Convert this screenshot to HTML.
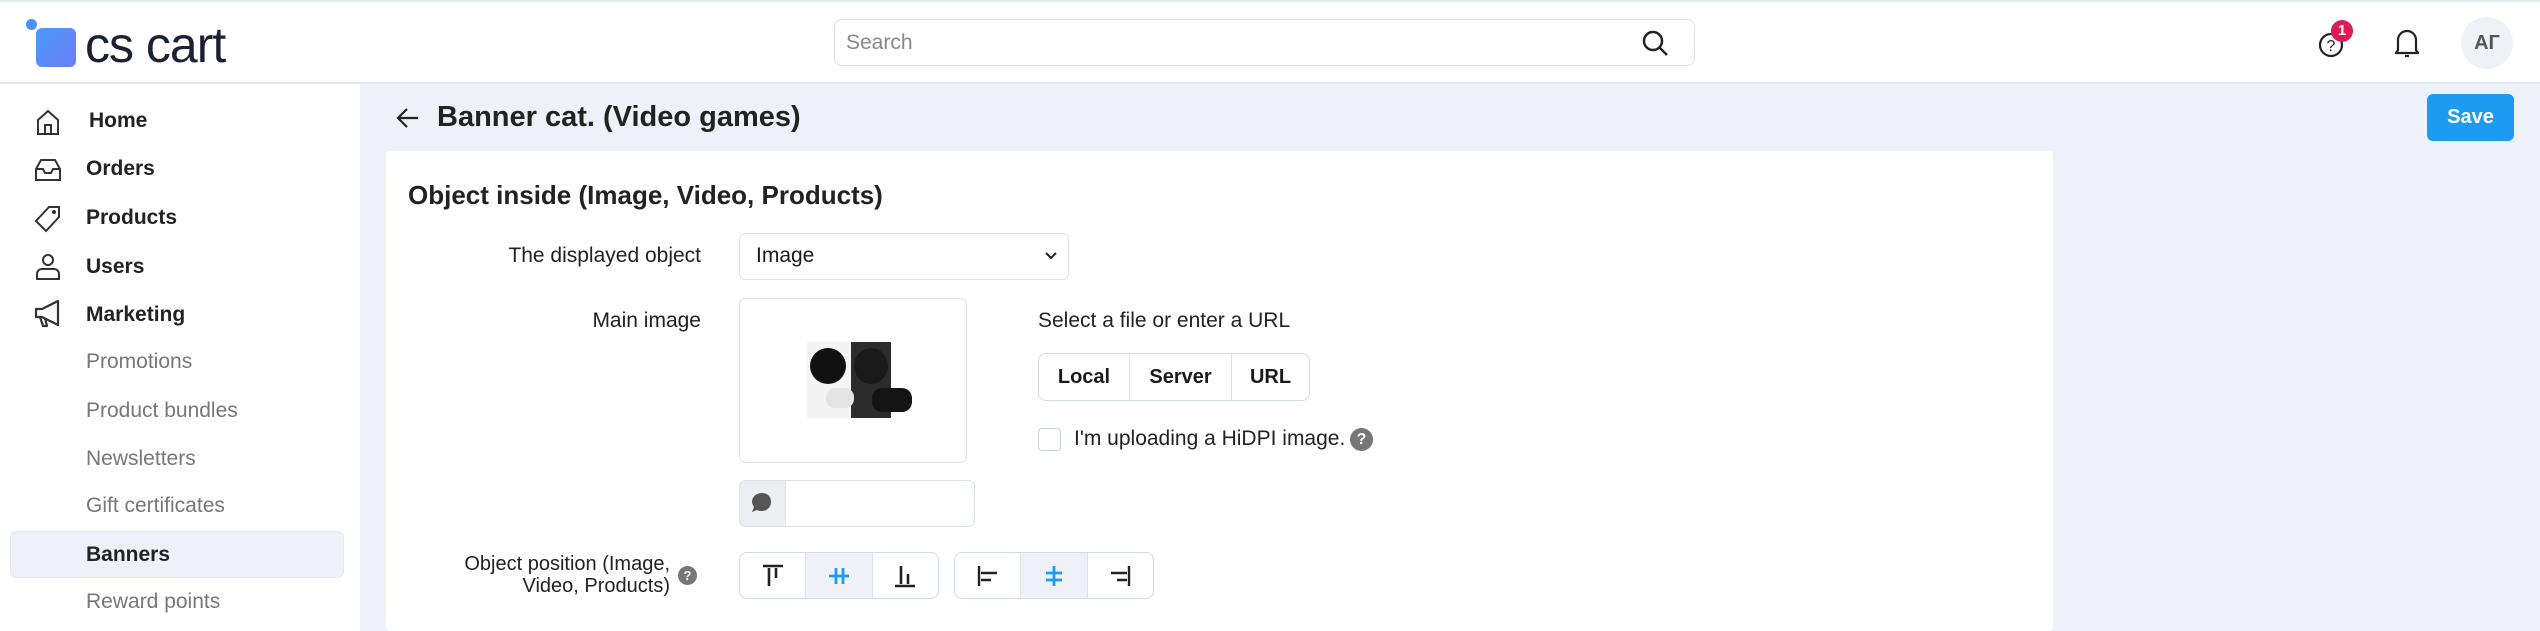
<!DOCTYPE html>
<html><head><meta charset="utf-8"><style>
*{box-sizing:border-box;margin:0;padding:0}
body{width:2540px;height:631px;overflow:hidden;background:#eef2f8;font-family:"Liberation Sans",sans-serif;color:#1a1a1a;position:relative}
.a{position:absolute}
.hdr{left:0;top:0;width:2540px;height:84px;background:#fff;border-top:2px solid #dde8ec;border-bottom:2px solid #e3e8f0}
.side{left:0;top:84px;width:360px;height:547px;background:#fff}
.nav{left:86px;font-size:21px;font-weight:bold;color:#222}
.sub{left:86px;font-size:21px;color:#777}
.card{left:386px;top:151px;width:1667px;height:480px;background:#fff;border-radius:4px}
.lbl{font-size:21px;color:#222;text-align:right}
.box{border:1.5px solid #dde2ea;border-radius:6px;background:#fff}
.seg{display:flex;border:1.5px solid #d3dbe8;border-radius:8px;overflow:hidden;background:#fff}
.seg div{flex:1;display:flex;align-items:center;justify-content:center;border-right:1.5px solid #dde3ec}
.seg div:last-child{border-right:none}
</style></head><body>
<div class="a hdr"></div>
<div class="a" style="left:36px;top:28px;width:40px;height:39px;border-radius:6px;background:linear-gradient(135deg,#4a9cf8,#6d7cf6)"></div>
<div class="a" style="left:26px;top:19px;width:11px;height:11px;border-radius:50%;background:#4f8ff7"></div>
<div class="a" style="left:85px;top:16px;font-size:50px;color:#1c2233;letter-spacing:-1px">cs cart</div>
<div class="a box" style="left:834px;top:19px;width:861px;height:47px;border-radius:8px"></div>
<div class="a" style="left:846px;top:31px;font-size:21px;color:#888">Search</div>
<svg class="a" style="left:1640px;top:28px" width="30" height="30" viewBox="0 0 30 30"><circle cx="13" cy="13" r="9" fill="none" stroke="#222" stroke-width="2.5"/><path d="M20 20l7 7" stroke="#222" stroke-width="2.5"/></svg>
<svg class="a" style="left:2316px;top:28px" width="32" height="32" viewBox="0 0 32 32"><circle cx="15" cy="17" r="11" fill="none" stroke="#222" stroke-width="2.2"/><text x="15" y="23" font-size="16" text-anchor="middle" font-family="Liberation Sans" fill="#222">?</text></svg>
<div class="a" style="left:2331px;top:20px;width:22px;height:22px;border-radius:50%;background:#dc1a56;color:#fff;font-size:15px;font-weight:bold;text-align:center;line-height:22px">1</div>
<svg class="a" style="left:2392px;top:26px" width="30" height="34" viewBox="0 0 30 34"><path d="M6 24V14a9 9 0 0118 0v10l2 3H4z" fill="none" stroke="#222" stroke-width="2.2" stroke-linejoin="round"/><path d="M13 30h4" stroke="#222" stroke-width="2.2"/></svg>
<div class="a" style="left:2461px;top:17px;width:52px;height:52px;border-radius:50%;background:#eef2f7;color:#555;font-weight:bold;font-size:20px;text-align:center;line-height:52px">АГ</div>

<div class="a side"></div>
<svg class="a" style="left:35px;top:108px" width="26" height="28" viewBox="0 0 26 28"><path d="M3 12L13 3l10 9v14H3z M10 26v-9h6v9" fill="none" stroke="#333" stroke-width="2"/></svg>
<svg class="a" style="left:33px;top:157px" width="30" height="26" viewBox="0 0 30 26"><path d="M3 12l5-9h14l5 9v11H3z M3 12h7l2 4h6l2-4h7" fill="none" stroke="#333" stroke-width="2"/></svg>
<svg class="a" style="left:33px;top:204px" width="30" height="30" viewBox="0 0 30 30"><path d="M16 3h10v10L13 27 3 17z" fill="none" stroke="#333" stroke-width="2"/><circle cx="21" cy="8" r="2" fill="#333"/></svg>
<svg class="a" style="left:33px;top:252px" width="30" height="30" viewBox="0 0 30 30"><circle cx="15" cy="8" r="5" fill="none" stroke="#333" stroke-width="2"/><path d="M4 27v-5a5 5 0 015-5h12a5 5 0 015 5v5z" fill="none" stroke="#333" stroke-width="2"/></svg>
<svg class="a" style="left:32px;top:299px" width="32" height="30" viewBox="0 0 32 30"><path d="M4 10h6l16-8v24L10 18H4z M8 18l3 9h4l-2-8" fill="none" stroke="#333" stroke-width="2.2" stroke-linejoin="round"/></svg>
<div class="a nav" style="top:109px;left:89px">Home</div>
<div class="a nav" style="top:157px">Orders</div>
<div class="a nav" style="top:206px">Products</div>
<div class="a nav" style="top:255px">Users</div>
<div class="a nav" style="top:303px">Marketing</div>
<div class="a sub" style="top:350px">Promotions</div>
<div class="a sub" style="top:399px">Product bundles</div>
<div class="a sub" style="top:447px">Newsletters</div>
<div class="a sub" style="top:494px">Gift certificates</div>
<div class="a" style="left:10px;top:531px;width:334px;height:47px;background:#eef2f8;border-radius:6px;border:1px solid #e4e9f1"></div>
<div class="a nav" style="top:543px">Banners</div>
<div class="a sub" style="top:590px">Reward points</div>

<svg class="a" style="left:395px;top:106px" width="26" height="24" viewBox="0 0 26 24"><path d="M23 12H4M12 3l-9 9 9 9" fill="none" stroke="#222" stroke-width="2.2"/></svg>
<div class="a" style="left:437px;top:101px;font-size:29px;font-weight:bold;color:#222">Banner cat. (Video games)</div>
<div class="a" style="left:2427px;top:94px;width:87px;height:47px;background:#1d9bf0;border-radius:6px;color:#fff;font-weight:bold;font-size:20px;text-align:center;line-height:47px">Save</div>

<div class="a card"></div>
<div class="a" style="left:408px;top:180px;font-size:26px;font-weight:bold;color:#222">Object inside (Image, Video, Products)</div>
<div class="a lbl" style="left:300px;width:401px;top:244px">The displayed object</div>
<div class="a box" style="left:739px;top:233px;width:330px;height:47px"></div>
<div class="a" style="left:756px;top:244px;font-size:21px">Image</div>
<svg class="a" style="left:1044px;top:251px" width="14" height="10" viewBox="0 0 14 10"><path d="M2 2l5 5 5-5" fill="none" stroke="#222" stroke-width="2"/></svg>

<div class="a lbl" style="left:300px;width:401px;top:309px">Main image</div>
<div class="a box" style="left:739px;top:298px;width:228px;height:165px"></div>
<div class="a" style="left:807px;top:342px;width:44px;height:76px;background:#f4f4f4"></div>
<div class="a" style="left:851px;top:342px;width:40px;height:76px;background:#2c2c2c"></div>
<div class="a" style="left:810px;top:348px;width:36px;height:36px;border-radius:50%;background:#111"></div>
<div class="a" style="left:854px;top:348px;width:34px;height:36px;border-radius:50%;background:#1a1a1a"></div>
<div class="a" style="left:826px;top:388px;width:28px;height:20px;border-radius:9px;background:#e4e4e4"></div>
<div class="a" style="left:872px;top:388px;width:40px;height:24px;border-radius:10px;background:#141414"></div>

<div class="a box" style="left:739px;top:480px;width:236px;height:47px;overflow:hidden"><div style="width:46px;height:100%;background:#eceef2;border-right:1px solid #dde2ea"></div></div>
<svg class="a" style="left:749px;top:490px" width="26" height="26" viewBox="0 0 26 26"><path d="M13 3c6 0 9 4 9 9s-4 9-9 9c-2 0-3 0-5-1l-5 2 2-5c-1-2-2-3-2-5 0-5 4-9 10-9z" fill="#555"/></svg>

<div class="a" style="left:1038px;top:309px;font-size:21px;color:#222">Select a file or enter a URL</div>
<div class="a seg" style="left:1038px;top:353px;width:272px;height:48px;font-size:20px;font-weight:bold">
<div style="flex:0 0 91px">Local</div><div style="flex:0 0 102px">Server</div><div>URL</div></div>
<div class="a" style="left:1038px;top:428px;width:23px;height:23px;border:1.5px solid #c8d0dc;border-radius:4px"></div>
<div class="a" style="left:1074px;top:427px;font-size:21px;color:#222">I'm uploading a HiDPI image.</div>
<div class="a" style="left:1350px;top:428px;width:23px;height:23px;border-radius:50%;background:#777;color:#fff;font-size:16px;font-weight:bold;text-align:center;line-height:23px">?</div>

<div class="a lbl" style="left:360px;width:310px;top:553px;line-height:22px;font-size:20px">Object position (Image,<br>Video, Products)</div>
<div class="a" style="left:678px;top:566px;width:19px;height:19px;border-radius:50%;background:#777;color:#fff;font-size:13px;font-weight:bold;text-align:center;line-height:19px">?</div>

<div class="a seg" style="left:739px;top:552px;width:200px;height:47px">
<div><svg width="26" height="26" viewBox="0 0 26 26"><path d="M3 3h20" stroke="#222" stroke-width="2.4"/><path d="M9 5v18M16 5v10" stroke="#222" stroke-width="2.6"/></svg></div>
<div style="background:#eef2f8"><svg width="26" height="26" viewBox="0 0 26 26"><path d="M10 5v16M17 5v16M3 13h20" stroke="#1d9bf0" stroke-width="2.8"/></svg></div>
<div><svg width="26" height="26" viewBox="0 0 26 26"><path d="M3 23h20" stroke="#222" stroke-width="2.4"/><path d="M9 3v18M16 11v10" stroke="#222" stroke-width="2.6"/></svg></div>
</div>
<div class="a seg" style="left:954px;top:552px;width:200px;height:47px">
<div><svg width="26" height="26" viewBox="0 0 26 26"><path d="M4 3v20" stroke="#222" stroke-width="2.4"/><path d="M6 10h16M6 17h10" stroke="#222" stroke-width="2.6"/></svg></div>
<div style="background:#eef2f8"><svg width="26" height="26" viewBox="0 0 26 26"><path d="M13 3v20M5 10h16M5 17h16" stroke="#1d9bf0" stroke-width="2.8"/></svg></div>
<div><svg width="26" height="26" viewBox="0 0 26 26"><path d="M22 3v20" stroke="#222" stroke-width="2.4"/><path d="M4 10h16M10 17h10" stroke="#222" stroke-width="2.6"/></svg></div>
</div>
</body></html>
